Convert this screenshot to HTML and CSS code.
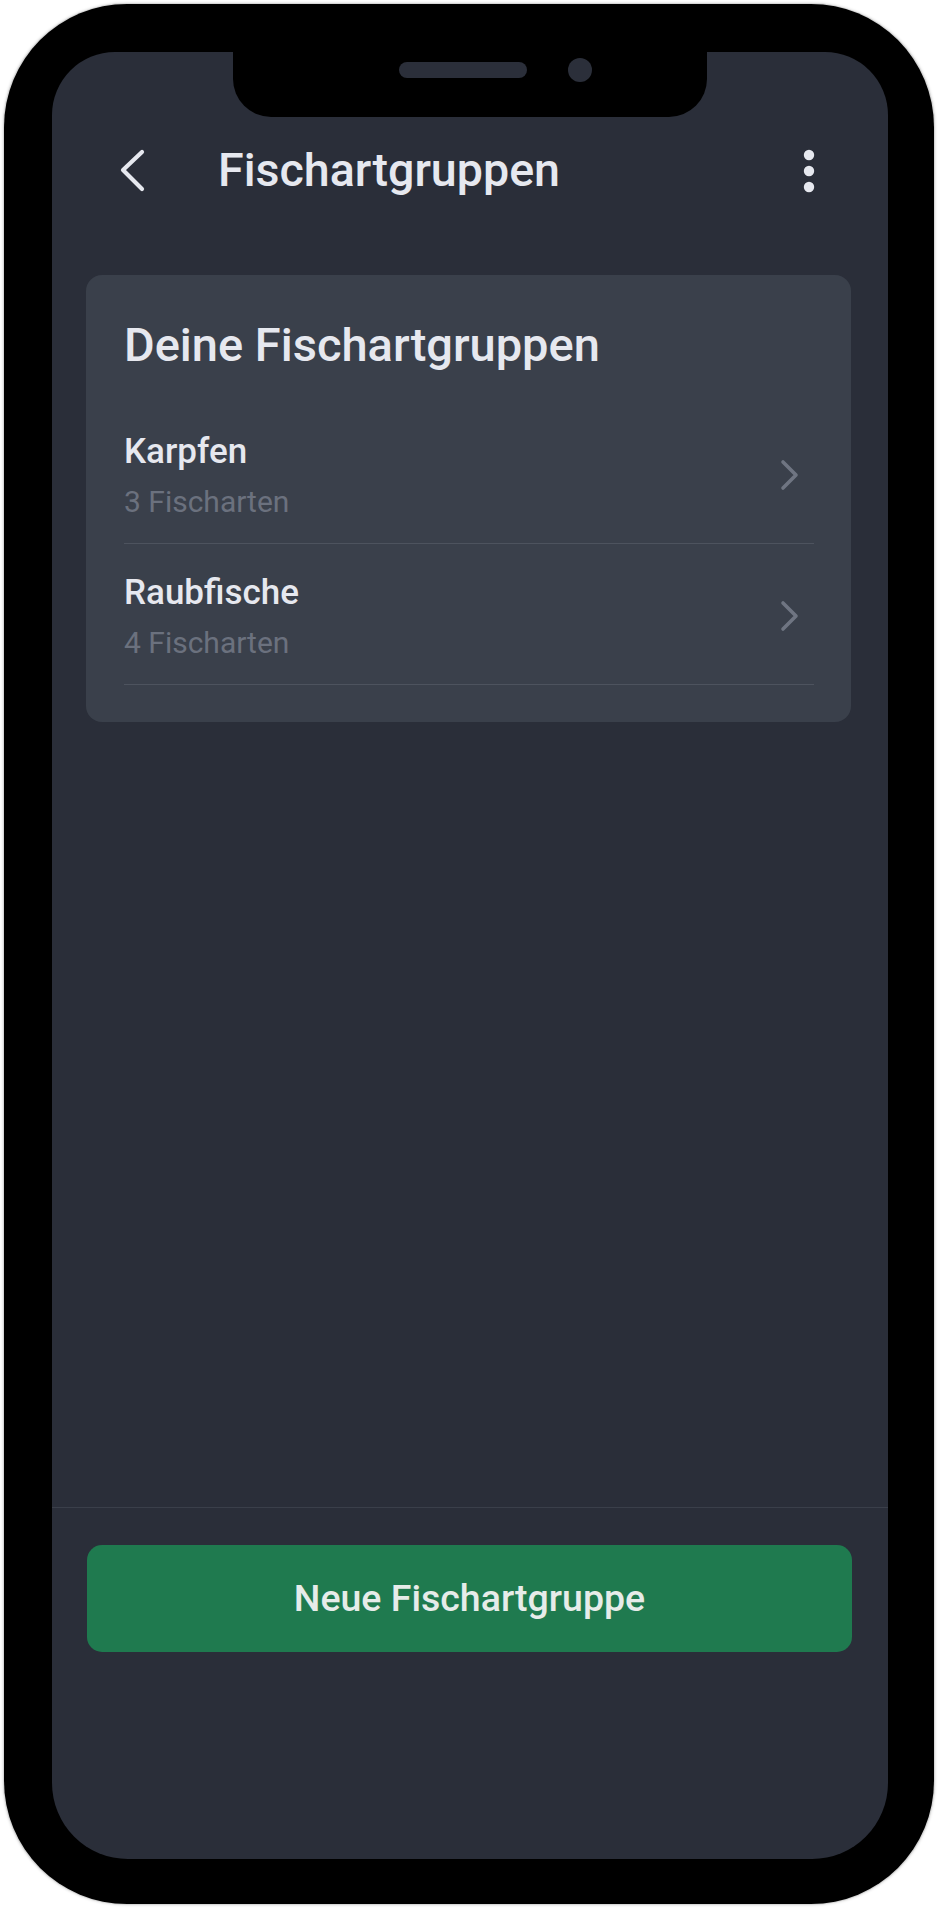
FILE: index.html
```html
<!DOCTYPE html>
<html lang="de">
<head>
<meta charset="utf-8">
<title>Fischartgruppen</title>
<link rel="stylesheet" href="styles.css">
</head>
<body>
<div class="phone">
  <div class="screen">
    <div class="notch">
      <span class="speaker"></span>
      <span class="camera"></span>
    </div>
    <header class="topbar">
      <div class="back">
        <svg width="26" height="44" viewBox="0 0 26 44" aria-hidden="true">
          <path d="M22 3 L3 21 L22 40" fill="none" stroke="#e6e8ef" stroke-width="4.2" stroke-linecap="round" stroke-linejoin="round"/>
        </svg>
      </div>
      <h1 class="title">Fischartgruppen</h1>
      <div class="kebab">
        <svg width="12" height="44" viewBox="0 0 12 44" aria-hidden="true">
          <circle cx="6" cy="6" r="5.2" fill="#e6e8ef"/>
          <circle cx="6" cy="22" r="5.2" fill="#e6e8ef"/>
          <circle cx="6" cy="38" r="5.2" fill="#e6e8ef"/>
        </svg>
      </div>
    </header>
    <main class="content">
      <section class="card">
        <h2 class="card-title">Deine Fischartgruppen</h2>
        <div class="row">
          <div class="row-text">
            <div class="row-name">Karpfen</div>
            <div class="row-sub">3 Fischarten</div>
          </div>
          <svg class="chev" width="20" height="34" viewBox="0 0 20 34" aria-hidden="true">
            <path d="M3 4 L16 17 L3 30" fill="none" stroke="#6f7582" stroke-width="3.6" stroke-linecap="round" stroke-linejoin="round"/>
          </svg>
        </div>
        <div class="row">
          <div class="row-text">
            <div class="row-name">Raubfische</div>
            <div class="row-sub">4 Fischarten</div>
          </div>
          <svg class="chev" width="20" height="34" viewBox="0 0 20 34" aria-hidden="true">
            <path d="M3 4 L16 17 L3 30" fill="none" stroke="#6f7582" stroke-width="3.6" stroke-linecap="round" stroke-linejoin="round"/>
          </svg>
        </div>
      </section>
    </main>
    <footer class="footer">
      <button class="primary">Neue Fischartgruppe</button>
    </footer>
  </div>
</div>
</body>
</html>
```

FILE: styles.css
```css
* { box-sizing: border-box; }
html, body {
  margin: 0;
  padding: 0;
  background: #ffffff;
}
body {
  font-family: Roboto, "Noto Sans", "Liberation Sans", sans-serif;
  width: 938px;
  height: 1909px;
  overflow: hidden;
}
.phone {
  margin: 4px 0 0 4px;
  width: 930px;
  height: 1900px;
  background: #000;
  border-radius: 123px;
  box-shadow: 0 0 0 1px #d6d6d6, 0 0 3px 1px rgba(0,0,0,0.18);
  padding: 48px 46px 45px 48px;
}
.screen {
  position: relative;
  width: 836px;
  height: 1807px;
  background: #2a2e39;
  border-radius: 63px 63px 76px 76px;
  overflow: hidden;
  display: flex;
  flex-direction: column;
}
.notch {
  position: absolute;
  top: 0;
  left: 181px;
  width: 474px;
  height: 65px;
  background: #000;
  border-radius: 0 0 38px 38px;
  display: flex;
  align-items: center;
  padding: 0 0 29px 166px;
  gap: 41px;
}
.speaker {
  width: 128px;
  height: 16px;
  border-radius: 8px;
  background: #2b2f3a;
}
.camera {
  width: 24px;
  height: 24px;
  border-radius: 50%;
  background: #2b2f3a;
}
.topbar {
  margin-top: 79px;
  height: 80px;
  display: flex;
  align-items: center;
  padding: 0 73px 0 68px;
}
.back {
  width: 98px;
  display: flex;
  align-items: center;
}
.back svg { display: block; }
.title {
  flex: 1;
  margin: 0;
  font-size: 46.6px;
  font-weight: 500;
  color: #e6e8ef;
  line-height: 54px;
  padding-bottom: 3px;
}
.kebab svg { display: block; }
.content {
  flex: 1;
  padding: 64px 37px 0 34px;
}
.card {
  background: #3a404b;
  border-radius: 16px;
  padding: 43px 37px 37px 38px;
}
.card-title {
  margin: 0 0 31px;
  font-size: 47px;
  font-weight: 500;
  line-height: 54px;
  color: #e6e8ef;
}
.row {
  display: flex;
  align-items: center;
  border-bottom: 1px solid #4d535e;
  padding: 29px 0 23px;
}
.row-text { flex: 1; }
.row-name {
  font-size: 35px;
  font-weight: 500;
  line-height: 40px;
  color: #e6e8ef;
}
.row-sub {
  margin-top: 12px;
  font-size: 30px;
  font-weight: 400;
  line-height: 36px;
  color: #6b717e;
}
.chev {
  display: block;
  margin-right: 14px;
  margin-top: -2px;
}
.footer {
  border-top: 1px solid #3a3f4a;
  padding: 37px 36px 207px 35px;
}
.primary {
  display: block;
  width: 100%;
  height: 107px;
  border: 0;
  border-radius: 15px;
  background: #1f7a4f;
  color: #e6ece9;
  font-family: Roboto, "Noto Sans", "Liberation Sans", sans-serif;
  font-size: 37.5px;
  font-weight: 500;
  padding: 0 0 2px;
}
```
